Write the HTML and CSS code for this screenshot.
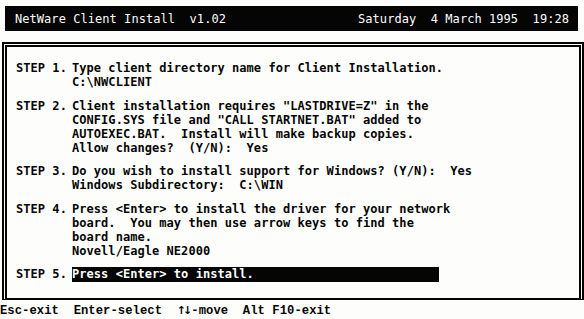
FILE: index.html
```html
<!DOCTYPE html>
<html lang="en">
<head>
  <meta charset="UTF-8">
  <meta name="viewport" content="width=device-width, initial-scale=1.0">
  <title>NetWare Client Install</title>
  <link rel="stylesheet" href="styles.css">
</head>
<body>
  <div class="title-bar">
    <span>NetWare Client Install  v1.02</span>
    <span>Saturday  4 March 1995  19:28</span>
  </div>

  <div class="frame">
    <div class="step">
      <span class="step-label">STEP 1.</span>
      <div class="step-text">Type client directory name for Client Installation.
C:\NWCLIENT</div>
    </div>

    <div class="step">
      <span class="step-label">STEP 2.</span>
      <div class="step-text">Client installation requires "LASTDRIVE=Z" in the
CONFIG.SYS file and "CALL STARTNET.BAT" added to
AUTOEXEC.BAT.  Install will make backup copies.
Allow changes?  (Y/N):  Yes</div>
    </div>

    <div class="step">
      <span class="step-label">STEP 3.</span>
      <div class="step-text">Do you wish to install support for Windows? (Y/N):  Yes
Windows Subdirectory:  C:\WIN</div>
    </div>

    <div class="step">
      <span class="step-label">STEP 4.</span>
      <div class="step-text">Press &lt;Enter&gt; to install the driver for your network
board.  You may then use arrow keys to find the
board name.
Novell/Eagle NE2000</div>
    </div>

    <div class="step">
      <span class="step-label">STEP 5.</span>
      <div class="step-text"><span class="selected">Press &lt;Enter&gt; to install.</span></div>
    </div>
  </div>

  <div class="key-help">Esc-exit  Enter-select  <span class="arrows">↑↓</span>-move  Alt F10-exit</div>
</body>
</html>
```

FILE: styles.css
```css
body {
  margin: 0;
  width: 584px;
  height: 319px;
  overflow: hidden;
  background-color: #fdfefc;
  color: #050505;
  font-family: "DejaVu Sans Mono", "Liberation Mono", monospace;
  font-size: 12px;
  font-weight: bold;
  letter-spacing: 0.05px;
}

.title-bar {
  display: flex;
  justify-content: space-between;
  align-items: center;
  height: 25px;
  margin: 6px 6px 0 5px;
  padding: 0 9px 0 10px;
  background-color: #050505;
  color: #fdfefc;
  font-weight: normal;
  white-space: pre;
}

.frame {
  box-sizing: border-box;
  width: 582px;
  height: 258px;
  margin: 11px 0 0 2px;
  padding: 14px 0 0 9px;
  border: 5px double #050505;
  border-bottom: 2px solid #050505;
}

.step {
  display: grid;
  grid-template-columns: 56px 1fr;
  line-height: 14px;
  margin-bottom: 9.5px;
}

.step-label,
.step-text {
  white-space: pre;
}

.selected {
  display: inline-block;
  width: 367px;
  height: 15px;
  line-height: 15px;
  margin-top: -1px;
  background-color: #050505;
  color: #fdfefc;
}

.key-help {
  margin-top: 4px;
  line-height: 14px;
  font-family: "Liberation Mono", monospace;
  font-size: 12.2px;
  white-space: pre;
}

.key-help .arrows {
  display: inline-block;
  width: 14.6px;
  overflow: hidden;
  font-family: "DejaVu Sans", sans-serif;
  font-size: 11px;
  letter-spacing: -3px;
  vertical-align: top;
}
```
